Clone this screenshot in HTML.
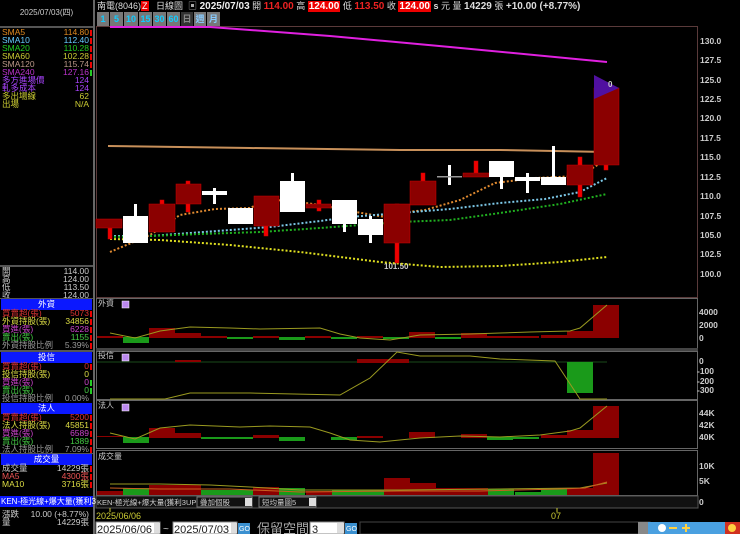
<!DOCTYPE html>
<html><head><meta charset="utf-8"><style>
*{margin:0;padding:0;box-sizing:border-box}
body{width:740px;height:534px;background:#000;overflow:hidden;position:relative;font-family:"Liberation Sans","Noto Sans CJK TC",sans-serif;font-size:9px;color:#ccc}
.a{position:absolute;white-space:nowrap}
.row{position:absolute;left:2px;width:90px;height:11px;font-size:8.5px;line-height:11px}
.row b{position:absolute;right:3px;font-weight:normal}
.row i{position:absolute;right:0;top:3px;width:2px;height:6px;background:#e00}
.hd{position:absolute;left:1px;width:91px;height:11px;background:#0b18ff;color:#fff;text-align:center;font-size:8.5px;line-height:11px}
.btn{position:absolute;top:12px;height:14px;background:#777;color:#1cf;font-size:9px;line-height:14px;text-align:center;font-weight:bold}
</style></head><body>
<!-- left panel -->
<div class="a" style="left:0;top:0;width:93px;height:26px;color:#ccc;font-size:8px;text-align:center;line-height:26px;background:#000">2025/07/03(四)</div>
<div class="a" style="left:0;top:26px;width:93px;height:2px;background:#555"></div>
<div class="a" style="left:93px;top:0;width:2px;height:534px;background:#666"></div>
<div class="row" style="top:27px;color:#e08a20">SMA5<b>114.80</b><i></i></div>
<div class="row" style="top:35px;color:#6cf">SMA10<b>112.40</b><i></i></div>
<div class="row" style="top:43px;color:#2c2">SMA20<b>110.28</b><i></i></div>
<div class="row" style="top:51px;color:#cc3">SMA60<b>102.28</b><i></i></div>
<div class="row" style="top:59px;color:#b98">SMA120<b>115.74</b><i></i></div>
<div class="row" style="top:67px;color:#b3c">SMA240<b>127.16</b><i style="background:#2c2"></i></div>
<div class="row" style="top:75px;color:#a4f">多方進場價<b>124</b></div>
<div class="row" style="top:83px;color:#a4f">軋多成本<b>124</b></div>
<div class="row" style="top:91px;color:#cc3">多出場線<b>62</b></div>
<div class="row" style="top:99px;color:#cc3">出場<b>N/A</b></div>
<div class="a" style="left:0;top:265px;width:93px;height:2px;background:#555"></div>
<div class="row" style="top:266px">開<b>114.00</b></div>
<div class="row" style="top:274px">高<b>124.00</b></div>
<div class="row" style="top:282px">低<b>113.50</b></div>
<div class="row" style="top:290px">收<b>124.00</b></div>
<div class="a" style="left:0;top:298px;width:93px;height:1px;background:#555"></div>
<div class="hd" style="top:299px">外資</div>
<div class="row" style="top:308px;color:#d33">買賣超(張)<b>5073</b><i></i></div>
<div class="row" style="top:316px;color:#dd4">外資持股(張)<b>34856</b><i></i></div>
<div class="row" style="top:324px;color:#c4c">買進(張)<b>6228</b><i></i></div>
<div class="row" style="top:332px;color:#4c4">賣出(張)<b>1155</b><i></i></div>
<div class="row" style="top:340px;color:#999">外資持股比例<b>5.39%</b><i></i></div>
<div class="a" style="left:0;top:350px;width:93px;height:2px;background:#555"></div>
<div class="hd" style="top:352px">投信</div>
<div class="row" style="top:361px;color:#d33">買賣超(張)<b>0</b><i></i></div>
<div class="row" style="top:369px;color:#dd4">投信持股(張)<b>0</b></div>
<div class="row" style="top:377px;color:#c4c">買進(張)<b>0</b><i style="background:#2c2"></i></div>
<div class="row" style="top:385px;color:#4c4">賣出(張)<b>0</b><i style="background:#2c2"></i></div>
<div class="row" style="top:393px;color:#999">投信持股比例<b>0.00%</b></div>
<div class="hd" style="top:403px">法人</div>
<div class="row" style="top:412px;color:#d33">買賣超(張)<b>5200</b><i></i></div>
<div class="row" style="top:420px;color:#dd4">法人持股(張)<b>45851</b><i></i></div>
<div class="row" style="top:428px;color:#c4c">買進(張)<b>6589</b><i></i></div>
<div class="row" style="top:436px;color:#4c4">賣出(張)<b>1389</b><i></i></div>
<div class="row" style="top:444px;color:#999">法人持股比例<b>7.09%</b><i></i></div>
<div class="a" style="left:0;top:453px;width:93px;height:1px;background:#555"></div>
<div class="hd" style="top:454px">成交量</div>
<div class="row" style="top:463px;color:#ccc">成交量<b>14229張</b><i></i></div>
<div class="row" style="top:471px;color:#e55">MA5<b>4300張</b><i></i></div>
<div class="row" style="top:479px;color:#dd4">MA10<b>3716張</b><i></i></div>
<div class="a" style="left:0;top:496px;width:93px;height:11px;background:#0b18ff;color:#fff;font-size:8px;line-height:11px;padding-left:1px">KEN-極光線+爆大量(獲利3UP)</div>
<div class="row" style="top:509px">漲跌<b>10.00 (+8.77%)</b></div>
<div class="row" style="top:517px">量<b>14229張</b></div>

<!-- header -->
<div class="a" style="left:97px;top:1px;font-size:9px;color:#ddd;line-height:11px">南電(8046)<span style="background:#e00;color:#fff;padding:0 1px">Z</span>&nbsp;&nbsp; 日線圖 &nbsp;<span style="color:#aaa">▣</span> <b style="font-size:10px;color:#eee">2025/07/03</b> 開 <b style="color:#e22;font-size:10px">114.00</b> 高 <b style="background:#e00;color:#fff;font-size:10px;padding:0 1px">124.00</b> 低 <b style="color:#e22;font-size:10px">113.50</b> 收 <b style="background:#e00;color:#fff;font-size:10px;padding:0 1px">124.00</b> <b>s</b> 元 量 <b style="font-size:10px">14229</b> 張 <b style="font-size:10px">+10.00 (+8.77%)</b></div>
<div class="btn" style="left:97px;width:12px">1</div>
<div class="btn" style="left:110px;width:13px">5</div>
<div class="btn" style="left:124px;width:14px">10</div>
<div class="btn" style="left:139px;width:13px">15</div>
<div class="btn" style="left:153px;width:13px">30</div>
<div class="btn" style="left:167px;width:13px">60</div>
<div class="btn" style="left:181px;width:12px;background:#333;color:#888">日</div>
<div class="btn" style="left:194px;width:12px;color:#8cf">週</div>
<div class="btn" style="left:207px;width:13px;color:#8cf">月</div>

<svg class="a" style="left:0;top:0" width="740" height="534" font-family="Liberation Sans" font-size="8.5" font-weight="bold">
<g fill="none" stroke="#5a3a3a"><rect x="96.5" y="26.5" width="601" height="271"/></g>
<g stroke="#666" fill="none"><rect x="96.5" y="298.5" width="601" height="51"/><rect x="96.5" y="351.5" width="601" height="48"/><rect x="96.5" y="400.5" width="601" height="48"/><rect x="96.5" y="450.5" width="601" height="45"/></g>
<rect x="96" y="348" width="602" height="3" fill="#444"/>
<g fill="#ccc">
<text x="700" y="44">130.0</text><text x="700" y="63">127.5</text><text x="700" y="83">125.0</text><text x="700" y="102">122.5</text><text x="700" y="121">120.0</text><text x="700" y="141">117.5</text><text x="700" y="160">115.0</text><text x="700" y="180">112.5</text><text x="700" y="199">110.0</text><text x="700" y="219">107.5</text><text x="700" y="238">105.0</text><text x="700" y="257">102.5</text><text x="700" y="277">100.0</text>
<text x="699" y="315">4000</text><text x="699" y="328">2000</text><text x="699" y="341">0</text>
<text x="699" y="364">0</text><text x="697" y="374">-100</text><text x="697" y="384">-200</text><text x="697" y="393">-300</text>
<text x="699" y="416">44K</text><text x="699" y="428">42K</text><text x="699" y="440">40K</text>
<text x="699" y="469">10K</text><text x="699" y="484">5K</text><text x="699" y="505">0</text>
<text x="384" y="269" font-size="8">101.50</text>
</g>
<!-- MA lines -->
<polyline points="110,27 210,27 330,36 450,47 607,62" stroke="#e020e0" stroke-width="2" fill="none"/>
<polyline points="108,146 250,148 400,150 500,150 607,152" stroke="#c8905a" stroke-width="2" fill="none"/>
<g fill="none" stroke-width="2" stroke-dasharray="2,2">
<polyline points="110,252 150,235 180,215 215,209 250,208 265,201 285,200 320,205 350,211 385,217 400,213 425,210 460,200 495,183 535,178 580,176 607,159" stroke="#e08a30"/>
<polyline points="110,236 150,236 190,233 230,230 270,227 320,221 350,217 400,213 450,209 500,203 545,199 580,192 607,178" stroke="#7cc8e8"/>
<polyline points="110,237 150,236 200,234 260,232 320,228 400,222 450,220 500,213 560,204 607,194" stroke="#20b020"/>
<polyline points="110,239 160,240 230,245 300,252 380,262 440,267 500,266 560,262 607,257" stroke="#e0e020"/>
</g>
<!-- candles -->
<g fill="#8b0000" stroke="#c00" stroke-width="0.5">
<rect x="108" y="228" width="4" height="11" fill="#e00"/>
<rect x="96" y="219" width="26" height="9"/>
<rect x="160" y="200" width="4" height="4" fill="#e00"/><rect x="149" y="204" width="26" height="28"/>
<rect x="186" y="181" width="4" height="31" fill="#e00"/><rect x="176" y="184" width="25" height="20"/>
<rect x="264" y="226" width="4" height="10" fill="#e00"/><rect x="254" y="196" width="25" height="30"/>
<rect x="317" y="200" width="4" height="11" fill="#e00"/><rect x="306" y="204" width="25" height="4"/>
<rect x="395" y="204" width="4" height="59" fill="#e00"/><rect x="384" y="204" width="26" height="39"/>
<rect x="421" y="173" width="4" height="8" fill="#e00"/><rect x="410" y="181" width="26" height="24"/>
<rect x="474" y="161" width="4" height="12" fill="#e00"/><rect x="463" y="173" width="26" height="4"/>
<rect x="578" y="157" width="4" height="40" fill="#e00"/><rect x="567" y="165" width="26" height="20"/>
<rect x="604" y="160" width="4" height="10" fill="#e00"/><rect x="594" y="88" width="25" height="77"/>
</g>
<polygon points="594,75 619,88 594,99" fill="#5010a0"/>
<g fill="#fff">
<rect x="134" y="204" width="3" height="12"/><rect x="123" y="216" width="25" height="27"/>
<rect x="213" y="188" width="3" height="16"/><rect x="202" y="191" width="25" height="4"/>
<rect x="228" y="208" width="25" height="16"/>
<rect x="291" y="173" width="3" height="8"/><rect x="280" y="181" width="25" height="31"/>
<rect x="343" y="224" width="3" height="8"/><rect x="332" y="200" width="25" height="24"/>
<rect x="369" y="216" width="3" height="27"/><rect x="358" y="219" width="25" height="16"/>
<rect x="448" y="165" width="3" height="20"/><rect x="437" y="176" width="25" height="1.5" fill="#999"/>
<rect x="500" y="177" width="3" height="12"/><rect x="489" y="161" width="25" height="16"/>
<rect x="526" y="173" width="3" height="20"/><rect x="515" y="177" width="25" height="4"/>
<rect x="552" y="146" width="3" height="31"/><rect x="541" y="177" width="25" height="8"/>
</g>
<text x="608" y="87" fill="#ccc" font-size="8">0</text>
<g fill="#b8e" stroke="#fff" stroke-width="0.5"><rect x="122" y="301" width="7" height="7"/><rect x="122" y="354" width="7" height="7"/><rect x="122" y="404" width="7" height="7"/></g>
<g fill="#ccc" font-weight="normal" font-size="8"><text x="98" y="306">外資</text><text x="98" y="358">投信</text><text x="98" y="408">法人</text><text x="98" y="459">成交量</text></g>
<!-- foreign bars -->
<g fill="#8b0000"><rect x="97" y="336" width="26" height="2"/><rect x="149" y="328" width="26" height="10"/><rect x="175" y="333" width="26" height="5"/><rect x="201" y="336" width="26" height="2"/><rect x="253" y="336" width="26" height="2"/><rect x="305" y="336" width="26" height="2"/><rect x="357" y="336" width="26" height="2"/><rect x="409" y="332" width="26" height="6"/><rect x="461" y="333" width="26" height="5"/><rect x="487" y="336" width="26" height="2"/><rect x="513" y="336" width="26" height="2"/><rect x="541" y="335" width="26" height="3"/><rect x="567" y="331" width="26" height="7"/><rect x="593" y="305" width="26" height="33"/></g>
<g fill="#1a9a1a"><rect x="123" y="337" width="26" height="6"/><rect x="227" y="337" width="26" height="2"/><rect x="279" y="337" width="26" height="3"/><rect x="331" y="337" width="26" height="2"/><rect x="383" y="337" width="26" height="2"/><rect x="435" y="337" width="26" height="2"/></g>
<polyline points="110,333 135,338 160,331 190,327 230,328 260,329 320,328 340,334 360,338 390,340 420,335 470,334 500,333 530,332 570,331 580,328 607,305" stroke="#9a9a20" fill="none"/>
<!-- margin -->
<line x1="97" y1="362" x2="607" y2="362" stroke="#1a4a1a"/>
<g fill="#8b0000"><rect x="175" y="360" width="26" height="2"/><rect x="357" y="359" width="26" height="4"/><rect x="383" y="359" width="26" height="4"/></g>
<rect x="567" y="362" width="26" height="31" fill="#1a9a1a"/>
<polyline points="110,399 165,399 190,393 250,393 340,395 370,378 397,352 420,356 470,356 500,359 555,361 580,399 607,399" stroke="#9a9a20" fill="none"/>
<!-- corporations -->
<g fill="#8b0000"><rect x="97" y="436" width="26" height="1"/><rect x="149" y="428" width="26" height="10"/><rect x="175" y="433" width="26" height="5"/><rect x="253" y="435" width="26" height="3"/><rect x="357" y="436" width="26" height="2"/><rect x="409" y="432" width="26" height="6"/><rect x="461" y="434" width="26" height="4"/><rect x="541" y="435" width="26" height="3"/><rect x="567" y="430" width="26" height="8"/><rect x="593" y="406" width="26" height="32"/></g>
<g fill="#1a9a1a"><rect x="123" y="437" width="26" height="6"/><rect x="201" y="437" width="26" height="2"/><rect x="227" y="437" width="26" height="2"/><rect x="279" y="437" width="26" height="4"/><rect x="331" y="437" width="26" height="3"/><rect x="487" y="437" width="26" height="3"/><rect x="513" y="437" width="26" height="2"/></g>
<polyline points="110,433 135,439 160,428 190,425 240,427 270,426 310,427 330,433 350,440 380,442 420,438 460,436 500,437 540,435 570,431 580,428 607,406" stroke="#9a9a20" fill="none"/>
<!-- volume -->
<g fill="#8b0000"><rect x="97" y="491" width="26" height="4"/><rect x="149" y="485" width="26" height="10"/><rect x="175" y="485" width="26" height="10"/><rect x="253" y="487" width="26" height="8"/><rect x="306" y="491" width="26" height="4"/><rect x="384" y="478" width="26" height="17"/><rect x="410" y="483" width="26" height="12"/><rect x="436" y="488" width="26" height="7"/><rect x="462" y="488" width="26" height="7"/><rect x="567" y="488" width="26" height="7"/><rect x="593" y="453" width="26" height="42"/></g>
<g fill="#1a9a1a"><rect x="123" y="488" width="26" height="7"/><rect x="201" y="490" width="26" height="5"/><rect x="227" y="490" width="26" height="5"/><rect x="279" y="488" width="26" height="7"/><rect x="332" y="490" width="26" height="5"/><rect x="358" y="490" width="26" height="5"/><rect x="488" y="489" width="26" height="6"/><rect x="515" y="492" width="26" height="3"/><rect x="541" y="488" width="26" height="7"/></g>
<polyline points="110,484 160,484 210,485 250,487 300,490 400,490 500,489 580,488 607,483" stroke="#9a9a20" fill="none"/>
<polyline points="110,488 160,489 230,489 300,492 400,491 480,491 560,489 585,488 607,482" stroke="#c86020" fill="none"/>
<!-- bottom rows -->
<rect x="96" y="496" width="602" height="12" fill="#111" stroke="#555"/>
<line x1="110" y1="508" x2="110" y2="512" stroke="#cc3"/><line x1="557" y1="508" x2="557" y2="512" stroke="#cc3"/>
<g font-weight="normal" font-size="8"><text x="97" y="505" fill="#ccc" font-size="7.5">KEN-極光線+爆大量(獲利3UP)</text>
<rect x="197" y="497" width="55" height="10" fill="#111" stroke="#777"/><text x="200" y="505" fill="#ccc" font-size="7.5">疊加個股</text><rect x="245" y="498" width="7" height="8" fill="#ddd"/>
<rect x="259" y="497" width="57" height="10" fill="#111" stroke="#777"/><text x="262" y="505" fill="#ccc" font-size="7.5">短均量圖5</text><rect x="309" y="498" width="7" height="8" fill="#ddd"/>
<text x="96" y="519" fill="#cc3" font-size="9">2025/06/06</text><text x="551" y="519" fill="#cc3" font-size="9">07</text></g>
<g font-weight="normal"><rect x="96" y="522" width="64" height="12" fill="#fff" stroke="#888"/><text x="97" y="533" fill="#222" font-size="11">2025/06/06</text><rect x="154" y="523" width="6" height="10" fill="#ddd"/>
<text x="163" y="532" fill="#ccc" font-size="10">~</text>
<rect x="173" y="522" width="64" height="12" fill="#fff" stroke="#888"/><text x="174" y="533" fill="#222" font-size="11">2025/07/03</text><rect x="231" y="523" width="6" height="10" fill="#ddd"/>
<rect x="238" y="523" width="12" height="11" fill="#3a90d0"/><text x="239" y="531" fill="#fff" font-size="7">GO</text>
<text x="257" y="533" fill="#aaa" font-size="13" font-family="Noto Sans CJK TC">保留空間</text>
<rect x="310" y="522" width="34" height="12" fill="#fff" stroke="#888"/><text x="312" y="533" fill="#222" font-size="11">3</text><rect x="337" y="523" width="7" height="10" fill="#ddd"/>
<rect x="345" y="523" width="12" height="11" fill="#3a90d0"/><text x="346" y="531" fill="#fff" font-size="7">GO</text>
<rect x="358" y="523" width="88" height="11" fill="#000"/></g>
<rect x="360" y="522" width="290" height="12" fill="#000" stroke="#444"/>
<rect x="638" y="522" width="102" height="12" fill="#4aa0e0"/>
<rect x="638" y="522" width="10" height="12" fill="#888"/>
<g fill="#ffd040"><circle cx="662" cy="528" r="4" fill="#fff"/><rect x="669" y="527" width="8" height="2"/><rect x="682" y="527" width="8" height="2"/><rect x="685" y="524" width="2" height="8"/></g>
<rect x="725" y="522" width="15" height="12" fill="#d03020"/><circle cx="732" cy="528" r="4" fill="#ffd040"/>
</svg>
</body></html>
